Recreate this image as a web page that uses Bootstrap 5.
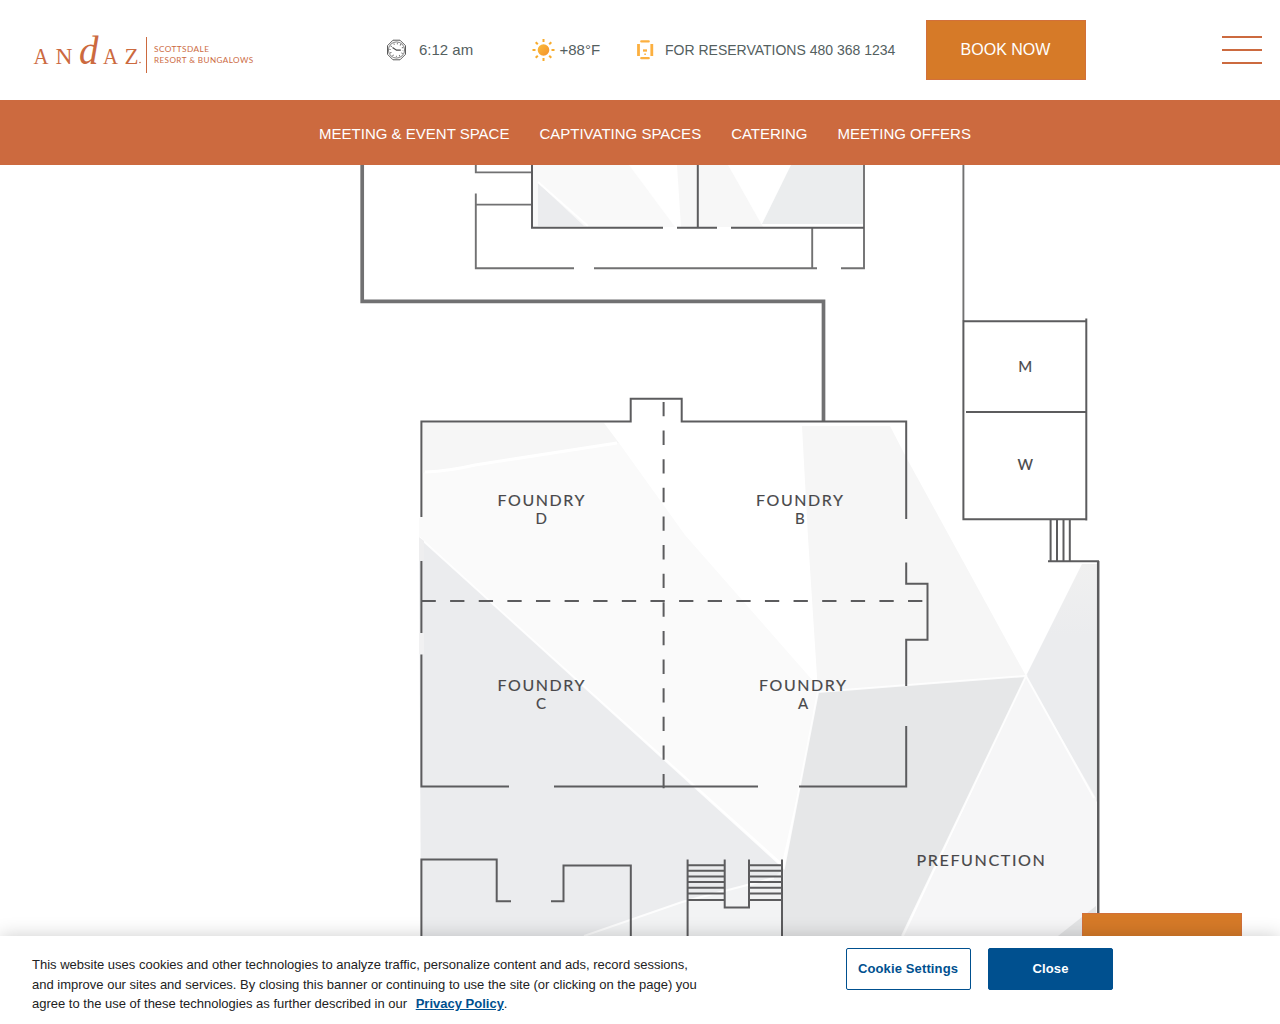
<!DOCTYPE html>
<html lang="en">
<head>
<meta charset="utf-8">
<meta name="viewport" content="width=device-width, initial-scale=1">
<title>Andaz Scottsdale Resort &amp; Bungalows - Floor Plan</title>
<link href="https://cdn.jsdelivr.net/npm/bootstrap@5.3.0/dist/css/bootstrap.min.css" rel="stylesheet">
<style>
  body { font-family: "Liberation Sans", Arial, sans-serif; height: 1024px; background: #fff; }
  .site-head { height: 100px; color: #54605f; }
  .brand-logo { margin-left: 30px; width: 230px; }
  .brand-logo, .head-item svg { display: block; flex: none; }
  .head-item { font-size: 15px; line-height: 20px; white-space: nowrap; }
  .item-time { margin-left: 126px; width: 145px; gap: 12px; }
  .item-temp { width: 105px; gap: 5px; padding-left: .5px; }
  .item-call { width: 289.5px; gap: 11px; font-size: 14px; }
  .btn-book { width: 160px; height: 60px; border-radius: 0; font-size: 16px; color: #fff; background: #d67a28; border: 1px solid #d2703a; }
  .menu-toggle { width: 40px; height: 28px; margin-right: 18px; }
  .menu-toggle span { height: 2px; background: #cc6a3f; }
  .sub-nav { height: 65px; background: #cc6a3f; gap: 30px; padding: 3px 0 0 10px; font-size: 15px; }
  .sub-nav .nav-link { color: #fff; padding: 0; white-space: nowrap; }
  .plan { height: 771px; }
  .plan svg { display: block; }
  .plan text { font-family: Lato, "Open Sans", sans-serif; font-size: 15px; fill: #48484a; stroke: #48484a; stroke-width: .15px; }
  .room-name { letter-spacing: 1.5px; }
  .float-book { position: absolute; left: 1082px; top: 748px; width: 160px; height: 60px; background: #d67a28; border: 1px solid #d2703a; }
  .cookie-bar { height: 88px; background: #fff; box-shadow: 0 0 18px rgba(0,0,0,.2); z-index: 2; }
  .cookie-text { margin: 19px 0 0 32px; width: 813.5px; font-size: 13px; line-height: 19.5px; color: #222; white-space: nowrap; }
  .cookie-text a { color: #00508f; font-weight: 700; margin-left: 5px; }
  .cookie-actions { gap: 17.5px; padding-top: 12px; }
  .cookie-actions .btn { width: 125px; height: 42px; border-radius: 2px; padding: 0; font-size: 13px; font-weight: 700; border: 1px solid #00508f; letter-spacing: .13px; }
  .btn-prefs { color: #00508f; background: #fff; }
  .btn-shut { color: #fff; background: #00508f; }
</style>
<script src="https://cdn.jsdelivr.net/npm/bootstrap@5.3.0/dist/js/bootstrap.bundle.min.js"></script>
</head>
<body class="d-flex flex-column overflow-hidden">
<header class="site-head d-flex align-items-center flex-shrink-0">
  <svg class="brand-logo" width="230" height="50" viewBox="30 25 230 50" fill="#cc6a3f" role="img" aria-label="Andaz">
    <g font-family="Liberation Serif, serif" font-size="24">
      <text x="33.500" y="63.500" textLength="15" lengthAdjust="spacingAndGlyphs">A</text>
      <text x="55.500" y="63.500" textLength="17" lengthAdjust="spacingAndGlyphs">N</text>
      <text x="79" y="63.500" font-size="39" font-style="italic">d</text>
      <text x="103" y="63.500" textLength="15" lengthAdjust="spacingAndGlyphs">A</text>
      <text x="124.500" y="63.500" textLength="14" lengthAdjust="spacingAndGlyphs">Z</text>
      <circle cx="140" cy="62.500" r=".8"/>
    </g>
    <path d="M146.500 37v36" stroke="#cc6a3f" stroke-width="1"/>
    <g font-family="Lato, sans-serif" font-size="7.5">
      <text x="154" y="52.300" textLength="55.500" lengthAdjust="spacingAndGlyphs" letter-spacing=".4">SCOTTSDALE</text>
      <text x="154" y="62.800" textLength="99.500" lengthAdjust="spacingAndGlyphs" letter-spacing=".4">RESORT &amp; BUNGALOWS</text>
    </g>
  </svg>
  <div class="head-item item-time d-flex align-items-center">
    <svg width="21" height="22" viewBox="0 0 21 22" fill="none" stroke="#4a4a4a">
      <path d="M7 1.200h7l5.500 5.500v8.600L14 20.800H7l-5.500-5.500V6.700z" stroke-width=".9" stroke-linejoin="round"/>
      <circle cx="10.500" cy="11" r="8.100" stroke-width=".7"/>
      <circle cx="10.500" cy="11" r="6.400" stroke-width="1.500" stroke-dasharray=".7 2.651" stroke-dashoffset=".35"/>
      <path d="M6.500 8.500l4 2.700h4.300" stroke-width="1.200"/>
    </svg>
    <span>6:12 am</span>
  </div>
  <div class="head-item item-temp d-flex align-items-center">
    <svg width="23" height="24" viewBox="-11.500 -12 23 24" stroke="#f8ac2c" stroke-width="2">
      <defs><linearGradient id="sun" x2="1" y2="1"><stop stop-color="#fbbd3c"/><stop offset="1" stop-color="#f4912b"/></linearGradient></defs>
      <circle r="5.800" fill="url(#sun)" stroke="none"/>
      <path d="M0-11v3M0 8v3M-11 0h3M8 0h3M-7.800-7.800l2.100 2.100M5.700 5.700l2.100 2.100M-7.800 7.800l2.100-2.100M5.700-5.700l2.100-2.100"/>
    </svg>
    <span>+88°F</span>
  </div>
  <div class="head-item item-call d-flex align-items-center">
    <svg width="18" height="22" viewBox="0 0 18 22" fill="none" stroke="#fcb040" stroke-width="2.800">
      <path d="M5.300 2.400h7.400M5.300 19.200h7.400" stroke-linecap="round" stroke-width="2.300"/>
      <path d="M2.500 5v12M15.800 5v12"/>
      <path d="M7 11.500h4" stroke-width="2.300"/><path d="M8.300 15.200h1.600" stroke-width="1.400"/>
    </svg>
    <span>FOR RESERVATIONS 480 368 1234</span>
  </div>
  <button class="btn btn-book p-0">BOOK NOW</button>
  <div class="menu-toggle d-flex flex-column justify-content-between ms-auto"><span></span><span></span><span></span></div>
</header>
<nav class="sub-nav nav d-flex justify-content-center align-items-center flex-shrink-0 flex-nowrap">
  <a class="nav-link" href="#">MEETING &amp; EVENT SPACE</a>
  <a class="nav-link" href="#">CAPTIVATING SPACES</a>
  <a class="nav-link" href="#">CATERING</a>
  <a class="nav-link" href="#">MEETING OFFERS</a>
</nav>
<main class="plan position-relative flex-shrink-0">
  <svg width="1280" height="771" viewBox="0 165 1280 771">
    <defs>
      <linearGradient id="pale" x2="0" y2="1"><stop offset="0" stop-color="#f0f0f0"/><stop offset=".3" stop-color="#ebecee"/><stop offset="1" stop-color="#ebecee"/></linearGradient>
    </defs>
    <!-- upper rooms -->
    <path d="M533 165h96l46 62H533z" fill="#f9f9f9"/>
    <path d="M538 183v43h46z" fill="#ebecee"/>
    <path d="M677 165h51l35 62h-82z" fill="#f7f7f7"/>
    <path d="M791 165h72v59H762z" fill="#ebedee"/>
    <path d="M538 182l50 44" stroke="#fff" stroke-width="2"/>
    <!-- ballroom and prefunction floor -->
    <path d="M422 423h182l15 20-196 30z" fill="#f6f6f6"/>
    <path d="M422 473l40-5 157-25 66 92 136 155-39 173L419 537z" fill="#fafafa"/>
    <path d="M425 472q25-1 50-7l142-22" stroke="#fff" stroke-width="3" fill="none"/>
    <path d="M802 426h88l16 31 120 219-208 16-10-155z" fill="#f6f6f6"/>
    <path d="M419 537L784 868l-3 68H421z" fill="#ebecee"/>
    <path d="M818 692l208-16-124 260H781l3-67z" fill="#e6e7e8"/>
    <path d="M1082 564h16v240l-72-128z" fill="url(#pale)"/>
    <path d="M1026 676l70 122v138H904z" fill="#f6f6f7"/>
    <path d="M1096 906v30h-38z" fill="#e3e4e5"/>
    <path d="M584 936l98-34 92-24 7-7v65z" fill="#f2f3f4"/>
    <path d="M419 537L784 868l34-176 208-16-124 260M1026 676l68 122M584 936l98-34 92-24" fill="none" stroke="#fff" stroke-width="2" stroke-opacity=".85"/>
    <path d="M419 518h5v19h-5z" fill="#fafafa"/><path d="M419 537l5 4v19h-5z" fill="#eeeeef"/><path d="M419 633h5v21h-5z" fill="#f1f1f2"/>
    <!-- walls -->
    <g fill="none" stroke="#717172">
      <path d="M362.200 165v136.300h461.300V421" stroke-width="3.700"/>
      <path d="M475.800 165v7.400H532M475.800 193.500v74.700H574M475.800 204.600H532M594 268.200h223M841 268.200h23V165M812.200 228v40" stroke-width="1.900"/>
      <path d="M963.400 165v155" stroke-width="1.900"/>
    </g>
    <g fill="none" stroke="#5c5c5e" stroke-width="2">
      <path d="M532 165v62.700h131M677 227.700h40M731 227.700h133M697.800 165v62.700"/>
      <path d="M963.400 320v199.300h123M963.400 321.300h123M1086.300 318.500v202M966 412h120"/>
      <path d="M1050.600 520v41M1057 520v41M1063.500 520v41M1069.800 520v41"/>
      <path d="M1048 561.200h51"/><path d="M1098.200 561v375" stroke-width="2.500"/>
      <path d="M421.400 517v-95.400h209.300v-22.800h51v22.800h224.500V519M906.200 562.500v21.200h21.300v56.100h-21.300V686M906.200 726v60.500H799M758 786.500H554M509 786.500h-87.600V654.500M421.400 561v72"/>
      <path d="M421.400 936v-76.500h75.300v41.700H511M551 901.200h12.500v-35.700h67.300V936"/>
      <path d="M687.600 859.500V936M724.700 859.500v48.100H749v-48.100M782 859.500V936"/>
      <path d="M688 865.300h36M688 870.800h36M688 876.600h36M688 882h36M688 887.700h36M688 893.500h36M688 900h36M749 865.300h33M749 870.800h33M749 876.600h33M749 882h33M749 887.700h33M749 893.500h33M749 900h33"/>
      <path d="M663.600 402v386.500M421.500 601H926" stroke-dasharray="14.300 14.320"/>
    </g>
    <!-- room names -->
    <g class="room-name">
      <text x="497.500" y="506.300" textLength="88.500" lengthAdjust="spacingAndGlyphs">FOUNDRY</text><text x="535.500" y="524">D</text>
      <text x="756" y="506.300" textLength="88.500" lengthAdjust="spacingAndGlyphs">FOUNDRY</text><text x="795" y="524">B</text>
      <text x="497.500" y="691.300" textLength="88.500" lengthAdjust="spacingAndGlyphs">FOUNDRY</text><text x="536" y="709">C</text>
      <text x="759" y="691.300" textLength="88.500" lengthAdjust="spacingAndGlyphs">FOUNDRY</text><text x="798" y="709">A</text>
      <text x="916.500" y="865.500" textLength="130" lengthAdjust="spacingAndGlyphs">PREFUNCTION</text>
      <text x="1018.200" y="372">M</text><text x="1017.500" y="469.800">W</text>
    </g>
  </svg>
  <div class="float-book"></div>
</main>
<footer class="cookie-bar position-relative d-flex align-items-start flex-shrink-0">
  <p class="cookie-text mb-0">This website uses cookies and other technologies to analyze traffic, personalize content and ads, record sessions,<br>and improve our sites and services. By closing this banner or continuing to use the site (or clicking on the page) you<br>agree to the use of these technologies as further described in our <a href="#">Privacy Policy</a>.</p>
  <div class="cookie-actions d-flex">
    <button class="btn btn-prefs">Cookie Settings</button>
    <button class="btn btn-shut">Close</button>
  </div>
</footer>
</body>
</html>
